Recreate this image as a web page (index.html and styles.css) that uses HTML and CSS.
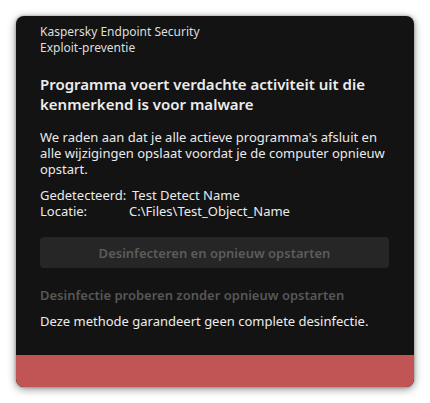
FILE: index.html
```html
<!DOCTYPE html>
<html lang="nl">
<head>
<meta charset="utf-8">
<link rel="stylesheet" href="styles.css">
</head>
<body>
<div class="window">
  <div class="content">
    <div class="app">
      <div>Kaspersky Endpoint Security</div>
      <div>Exploit-preventie</div>
    </div>
    <h1 class="heading">Programma voert verdachte activiteit uit die kenmerkend is voor malware</h1>
    <p class="body">We raden aan dat je alle actieve programma's afsluit en alle wijzigingen opslaat voordat je de computer opnieuw opstart.</p>
    <div class="details">
      <div class="row"><span class="k1">Gedetecteerd:</span><span>Test Detect Name</span></div>
      <div class="row"><span class="k2">Locatie:</span><span>C:\Files\Test_Object_Name</span></div>
    </div>
    <button class="btn" disabled>Desinfecteren en opnieuw opstarten</button>
    <div class="link">Desinfectie proberen zonder opnieuw opstarten</div>
    <div class="note">Deze methode garandeert geen complete desinfectie.</div>
  </div>
  <div class="band"></div>
</div>
</body>
</html>
```

FILE: styles.css
```css
html, body {
  margin: 0;
  padding: 0;
  background: #ffffff;
}
body {
  padding: 16px;
  font-family: "Noto Sans", "Open Sans", sans-serif;
}
.window {
  width: 398px;
  height: 371px;
  background: #131313;
  border-radius: 8px;
  box-shadow: 0 2px 8px rgba(0,0,0,0.45), 0 0 3px rgba(0,0,0,0.3);
  display: flex;
  flex-direction: column;
  overflow: hidden;
}
.content {
  flex: 1;
  padding: 8px 25px 0 24px;
  display: flex;
  flex-direction: column;
}
.app {
  font-size: 12px;
  line-height: 16px;
  color: #dedede;
}
.heading {
  margin: 18px 0 0 0;
  font-size: 15px;
  line-height: 20px;
  font-weight: 600;
  color: #ededed;
}
.body {
  margin: 15px 0 0 0;
  font-size: 13px;
  line-height: 16px;
  color: #eaeaea;
}
.details {
  margin-top: 10px;
  display: flex;
  flex-direction: column;
  font-size: 13px;
  line-height: 16px;
  color: #eaeaea;
}
.row {
  display: flex;
  height: 16px;
}
.k1 { width: 92px; }
.k2 { width: 89px; }
.btn {
  margin-top: 18px;
  height: 31px;
  border: none;
  border-radius: 4px;
  background: #262626;
  color: #5c5c5c;
  font-family: inherit;
  font-size: 13px;
  font-weight: 600;
  padding: 0;
}
.link {
  margin-top: 19px;
  font-size: 13px;
  line-height: 16px;
  font-weight: 600;
  color: #575757;
}
.note {
  margin-top: 10px;
  font-size: 13px;
  line-height: 16px;
  color: #ededed;
}
.band {
  height: 32px;
  background: #c15556;
}
```
